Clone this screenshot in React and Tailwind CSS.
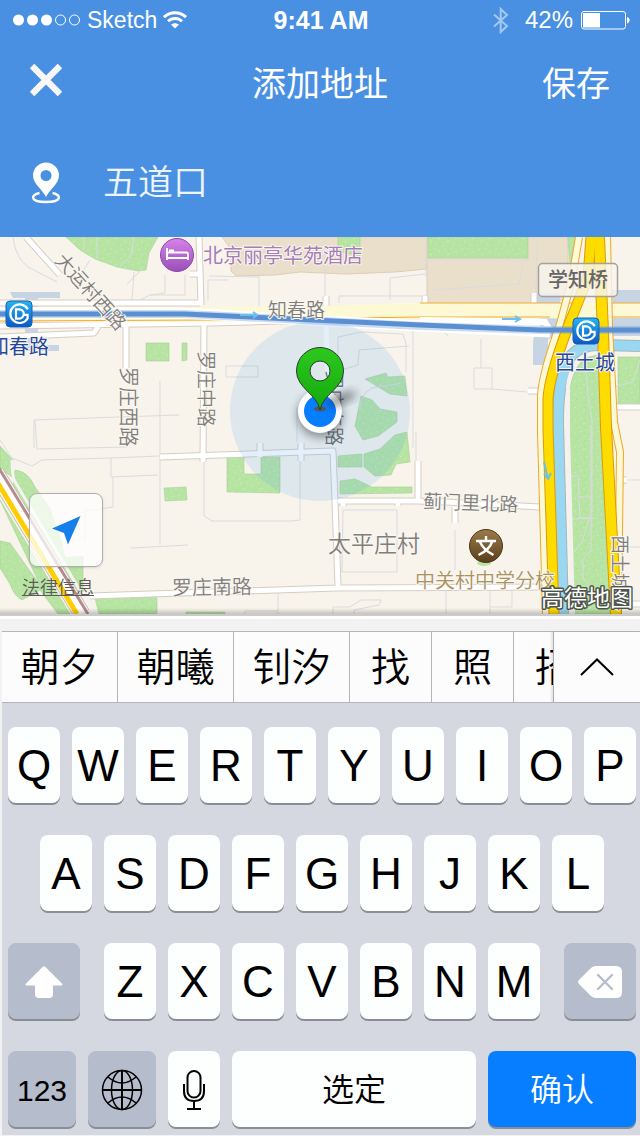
import React from 'react';

const CANDIDATES = [
  { text: '朝夕', width: 'w-29' },
  { text: '朝曦', width: 'w-29' },
  { text: '钊汐', width: 'w-29' },
  { text: '找', width: 'w-[82px]' },
  { text: '照', width: 'w-[82px]' },
  { text: '招', width: 'w-[82px]' },
];

function Key({ children, className = '', tone = 'bg-[#fdfefe] text-black', ...rest }) {
  return (
    <button
      type="button"
      className={`flex h-[76px] items-center justify-center rounded-lg pt-0.5 shadow-[0_2px_0_#8b8d92] ${tone} ${className}`}
      {...rest}
    >
      {children}
    </button>
  );
}

function LetterKeys({ letters }) {
  return letters.split('').map((letter) => (
    <Key key={letter} className="text-[44px] leading-none">
      {letter}
    </Key>
  ));
}

function StatusBar() {
  return (
    <div className="grid h-10 grid-cols-3 items-center pr-[10px] pl-3">
      <div className="flex items-center gap-1.5">
        <svg width="69" height="12" viewBox="0 0 69 12" aria-hidden="true">
          <g fill="#fff">
            <circle cx="6.500" cy="6" r="5.500" />
            <circle cx="20.500" cy="6" r="5.500" />
            <circle cx="34.500" cy="6" r="5.500" />
          </g>
          <g fill="none" stroke="#fff">
            <circle cx="48.500" cy="6" r="5" />
            <circle cx="62.500" cy="6" r="5" />
          </g>
        </svg>
        <span className="text-[23px] leading-7">Sketch</span>
        <svg width="24" height="18" viewBox="0 0 24 18" aria-hidden="true">
          <g fill="none" stroke="#fff" strokeWidth="3">
            <path d="M1 6.200C7 .400 17 .400 23 6.200" />
            <path d="M5 10.300c4-3.900 10-3.900 14 0" />
          </g>
          <path d="M12 17.600l-3.900-3.800c2.300-2 5.500-2 7.800 0z" fill="#fff" />
        </svg>
      </div>
      <div className="text-center text-[25px] leading-7 font-bold">9:41 AM</div>
      <div className="flex items-center justify-end">
        <svg width="16" height="27" viewBox="0 0 16 27" className="mr-4 opacity-50" aria-hidden="true">
          <path d="M1 7.500l13 11.500-6.300 6V2l6.300 6L1 19.500" fill="none" stroke="#fff" strokeWidth="2" />
        </svg>
        <span className="mr-2 text-[24px] leading-7">42%</span>
        <svg width="49" height="20" viewBox="0 0 49 20" aria-hidden="true">
          <rect x=".5" y="1.500" width="44" height="17.500" rx="2.500" fill="none" stroke="#fff" />
          <rect x="2" y="3" width="17" height="14.500" fill="#fff" />
          <path d="M46 7c3.500 1 3.500 5.500 0 6.500z" fill="#fff" />
        </svg>
      </div>
    </div>
  );
}

function Station({ x, y }) {
  return (
    <g transform={`translate(${x} ${y})`}>
      <rect x="-13" y="-13" width="26" height="26" rx="4" fill="url(#station)" stroke="#1660b5" />
      <path
        d="M8.800-4.800A9.300 9.300 0 1 0 8.600 4.500V.800H4"
        fill="none"
        stroke="#fff"
        strokeWidth="2.200"
      />
      <path d="M-3-4.600h3.200a4.600 4.600 0 0 1 0 9.200H-3z" fill="none" stroke="#fff" strokeWidth="2.200" />
    </g>
  );
}

function MapDrawing() {
  return (
    <svg viewBox="0 237 640 377" className="block h-auto w-full" role="img" aria-label="地图">
      <defs>
        <linearGradient id="station" x1="0" y1="0" x2="0" y2="1">
          <stop offset="0" stopColor="#27b4ee" />
          <stop offset="1" stopColor="#0a56c8" />
        </linearGradient>
        <linearGradient id="hotel" x1="0" y1="0" x2="0" y2="1">
          <stop offset="0" stopColor="#d682ea" />
          <stop offset="1" stopColor="#9a4fb8" />
        </linearGradient>
        <linearGradient id="school" x1="0" y1="0" x2="0" y2="1">
          <stop offset="0" stopColor="#9b7b4b" />
          <stop offset="1" stopColor="#5b3f1c" />
        </linearGradient>
        <linearGradient id="pin" x1="0" y1="0" x2="0" y2="1">
          <stop offset="0" stopColor="#2cc81e" />
          <stop offset="1" stopColor="#15a80e" />
        </linearGradient>
        <linearGradient id="edge" x1="0" y1="0" x2="0" y2="1">
          <stop offset="0" stopColor="#000" stopOpacity="0" />
          <stop offset="1" stopColor="#000" stopOpacity=".2" />
        </linearGradient>
        <pattern id="grass" width="17" height="13" patternUnits="userSpaceOnUse">
          <rect width="17" height="13" fill="#b7e4a3" />
          <path d="M2 3l2-1M9 1l1 1M13 5l2-1M5 8l2-1M11 11l1-1M1 11l1 1" stroke="#c9edb8" strokeWidth="1" />
          <path d="M6 4l1 1M15 9l1 1M8 11l-1 1" stroke="#aadb96" strokeWidth="1" />
        </pattern>
        <filter id="soft" x="-50%" y="-50%" width="200%" height="200%">
          <feGaussianBlur stdDeviation="4" />
        </filter>
      </defs>

      <rect y="237" width="640" height="377" fill="#f8f4ec" />

      {/* building blocks */}
      <g fill="#eadfca" stroke="#dccfb8">
        <path d="M222 237l9 12v22l5 5 39-1 25-3 46 2 49-2 32-3V237z" />
        <path d="M427 237h141v62l-32 5H427z" />
      </g>

      {/* parks */}
      <g fill="url(#grass)" stroke="#a9cf98" strokeWidth=".6">
        <path d="M66 237h92l-9 16-3 17-8 1-21-4-22-8-15-9z" />
        <path d="M338 237h22v19l-22-5zM428 237h100v21H428zM568 237h10l-8 30z" />
        <path d="M146 343h23v18h-23zM182 343h5v17l-5 1zM164 488l22-1 1 13-22 1z" />
        <path d="M227 457h17v17h17v-17h19v36l-53-1z" />
        <path d="M365 379l21-6 2 4 17-1 2 20-17-2zM361 396l11 4 8 9 17 3v10l-19 14-15 4-8-14z" />
        <path d="M338 456l24-2v13h-24zM364 454l16-5 15-14 12-3 3 30-14 2-5 11-16 1-11-9zM340 481l15-2 17 8h40v6l-72 1z" />
        <path d="M0 446l13 14-1 17-12-9zM15 470q13 1 20 17l14 20 11 30 5 21 18-2v36l-10-1-60-105z" />
        <path d="M0 500l70 114H58L40 590l-18 10q-8-4-12-16L0 568v-27l10 2 30 42z" />
        <path d="M95 598l62-4v20H99zM186 612h39v2h-39z" />
        <path d="M585 358l16-4 3 80 6 180h-37l-6-182q-2-58 18-74z" />
        <path d="M618 357h22v48h-22zM640 319q-6 0-6 11h6z" />
      </g>

      {/* lot lines */}
      <g fill="none" stroke="#d9dbe0" strokeWidth="1">
        <path d="M13 237q2 20 15 30l29 15M90 260l-15 24M134 272l-2 28-28 3M165 275v18l-15 2-10 5M185 275v20h-35M208 280v20M208 280h20" />
        <path d="M84 237v13M97 237v21M134 237l-3 18-12 13M142 269l-15 15M209 276l50 1 0 30M325 237v65M339 303v-7h87M390 300v-22l35-4" />
        <path d="M160 381v164M34 448v-28l85-3 60-2M35 420l2 29 90-2M0 440l12 18 20 8 10-6 69-2 48-2M111 457v20l47-2M113 477v30l-28 4v30M131 548l57-3M204 462v54l8 5" />
        <path d="M300 448v72l-8 1h-81M226 366h32v11h-32zM297 442v-35" />
        <path d="M338 368v-31l23-5 42 2 3 10v28M338 371l20-6 1-15 50-4M360 410q-2-14 12-22l30-5M413 328v120M416 432v30" />
        <path d="M343 510h54v62h-55zM278 590v24M245 614v-3h33M333 614v-7h17l11-7h20l-2 5-25 5v4M446 587v27M490 587v27M490 607h22v-20" />
        <path d="M426 237v40M425 260h104M434 290l85-6 4-22M537 237v12l-1 45M441 328l7 8M481 339v29M474 368h18v21h-18zM492 389l35 3" />
        <path d="M585 360l3 35 4 25v90l-10 32-8 10M591 425v125l-8 10v18l15 20M570 476h8l2 42h14M580 497h12M572 519l22-1M625 480h15M613 547h27M455 530v40M640 360l-7 22-20 5" />
      </g>

      {/* transit footprint */}
      <g fill="#c6d4e3">
        <path d="M10 292h50v6H38v12h13v16H38v19h21v6H25V298H13z" />
        <path d="M540 293h20v40h-20v-30h-8v-8zM533 365v-22q0-12 12-14l14-1v9l-11 2v26zM612 290h28v46h-32v-30h5z" />
      </g>

      {/* river */}
      <path d="M640 346l-38-1q-22-1-32 12-12 20-12 65l5 192" fill="none" stroke="#a5b6bd" strokeWidth="12" />
      <path d="M640 346l-38-1q-22-1-32 12-12 20-12 65l5 192" fill="none" stroke="#9ad7f1" strokeWidth="10" />
      <path d="M583 357q-13 9-15 30v45l5 182" fill="none" stroke="#f5f1ee" strokeWidth="4" />

      {/* local streets */}
      <g fill="none" strokeLinejoin="round">
        <g stroke="#d6cdc2" strokeWidth="7">
          <path d="M26 237l34 38M0 303h200M0 337l94-4 5-8M0 326l210-3 40-1 150-5M126 325v43M199 237l2 68M190 274h11M204 318l-1 144" />
          <path d="M160 457l173-6 2 50 3 85M260 443v14M301 443v18M326 296v12M338 501h80l28 1 94 5M418 461v40M343 501v5M398 501v5M90 596l247-8 205-1M455 507v16M425 296v8M534 293v10M528 391h12M615 407h25M619 480h8M630 604h10" />
        </g>
        <g stroke="#fff" strokeWidth="5">
          <path d="M26 237l34 38M0 303h200M0 337l94-4 5-8M0 326l210-3 40-1 150-5M126 325v43M199 237l2 68M190 274h11M204 318l-1 144" />
          <path d="M160 457l173-6 2 50 3 85M260 443v14M301 443v18M326 296v12M338 501h80l28 1 94 5M418 461v40M343 501v5M398 501v5M90 596l247-8 205-1M455 507v16M425 296v8M534 293v10M528 391h12M615 407h25M619 480h8M630 604h10" />
        </g>
        <path d="M326 322l2 60" stroke="#fff" strokeWidth="5" />
      </g>

      {/* Zhichun road */}
      <path d="M0 307h210l110-1 100-3h220v15l-220 1-210 3H0z" fill="#fdf9d4" />
      <path d="M0 321l210-1 210-3h130M420 303h160M612 303h28M612 317h28" fill="none" stroke="#f3ab35" strokeWidth="1.200" />
      <path d="M0 313h180l240 13 130 6" fill="none" stroke="#fff" strokeWidth="11" />
      <path d="M420 320l125 2 5 8" fill="none" stroke="#fff" strokeWidth="6" />

      {/* ring road */}
      <g fill="none" strokeLinejoin="round">
        <path d="M579 237l-7 42-12 45q-18 50-19 72v36l5 182" stroke="#f0a52f" strokeWidth="8" />
        <path d="M579 237l-7 42-12 45q-18 50-19 72v36l5 182" stroke="#fdf9d4" strokeWidth="6" />
        <path d="M607 237l2 90 5 95 6 30-2 162" stroke="#f0a52f" strokeWidth="8" />
        <path d="M607 237l2 90 5 95 6 30-2 162" stroke="#fdf9d4" strokeWidth="6" />
        <path d="M591 237l-3 40-20 50q-19 50-20 72v30l6 185" stroke="#d99a10" strokeWidth="11" />
        <path d="M599 237l4 95 3 95 10 187" stroke="#d99a10" strokeWidth="12" />
        <path d="M591 237l-3 40-20 50q-19 50-20 72v30l6 185" stroke="#ffdc00" strokeWidth="9" />
        <path d="M599 237l4 95 3 95 10 187" stroke="#ffdc00" strokeWidth="10" />
      </g>

      {/* railway corridor */}
      <path d="M-4 473l86 141" fill="none" stroke="#c9bfb2" strokeWidth="17" />
      <path d="M-4 473l86 141" fill="none" stroke="#fff" strokeWidth="15" />
      <path d="M-3 465L88 614" stroke="#b58b8b" strokeWidth="3" />
      <path d="M-4 480l81 134" stroke="#ffcd00" strokeWidth="5" />
      <path d="M12 460q0 12 2 20l80 134" fill="none" stroke="#f6f3f3" strokeWidth="3" />

      {/* metro line */}
      <path d="M0 314h185l235 12 120 4h100" fill="none" stroke="#6c9bd6" strokeWidth="8" opacity=".35" />
      <path d="M0 314h185l235 11 120 5h100" fill="none" stroke="#5a8fd2" strokeWidth="5" />
      <g fill="none" stroke="#69bff2" strokeWidth="2">
        <path d="M240 315h17M253 312l4 3-4 3M502 319h17M515 316l5 3-5 3M544 462l4 17M544 474l4 5 3-6" />
      </g>

      {/* accuracy ring and current position */}
      <circle cx="320" cy="411" r="90" fill="#5aa6f0" opacity=".17" />
      <g fontFamily='"Noto Sans CJK SC", sans-serif' fontSize="19" fontWeight="350" fill="#66717d">
        <text transform="translate(327 370) rotate(90)">罗庄东路</text>
      </g>
      <circle cx="320" cy="415" r="23" fill="#000" opacity=".35" filter="url(#soft)" />
      <circle cx="320" cy="411" r="22" fill="#fff" />
      <circle cx="320" cy="411" r="16" fill="#077dff" />
      <ellipse cx="341" cy="399" rx="16" ry="5" transform="rotate(-22 341 399)" fill="#222" opacity=".5" filter="url(#soft)" />
      <ellipse cx="320" cy="409" rx="6" ry="2.500" fill="#555" />
      <path
        d="M320 410c-3-16-23.500-22-23.500-39a23.500 23.500 0 0 1 47 0c0 17-20.500 23-23.500 39zm0-49a10 10 0 1 0 0 20 10 10 0 0 0 0-20z"
        fill="url(#pin)"
        stroke="#26402a"
        fillRule="evenodd"
      />

      {/* points of interest */}
      <circle cx="177" cy="255" r="16.500" fill="url(#hotel)" stroke="#8c4aa6" />
      <path d="M167 248v12M167 258h21" fill="none" stroke="#fff" strokeWidth="2" />
      <path d="M168 252.500h18.500q1.500 0 1.500 1.500v6M169 250.500h5" fill="none" stroke="#fff" strokeWidth="1.800" />
      <ellipse cx="484" cy="563" rx="7" ry="3" fill="#b7e4a3" />
      <circle cx="486" cy="546" r="16.500" fill="url(#school)" stroke="#4d3517" />
      <path d="M476 541h20M486 536v5M492.500 541q-3 9-14 14M479.500 541q4 9 14 14" fill="none" stroke="#fff" strokeWidth="2.400" />
      <Station x={19} y={314} />
      <Station x={586} y={331} />
      <rect x="538.500" y="263.500" width="79" height="33" rx="4" fill="#f8f4ee" fillOpacity=".82" stroke="#a5a19a" strokeWidth="1.500" />

      {/* labels */}
      <g
        fontFamily='"Noto Sans CJK SC", sans-serif'
        fontSize="20"
        fontWeight="350"
        fill="#7f7e7b"
        stroke="#faf7f1"
        strokeWidth="2"
        strokeLinejoin="round"
        paintOrder="stroke"
      >
        <text transform="translate(54 261) rotate(48)" fontSize="19">大运村西路</text>
        <text transform="translate(121 367) rotate(90)">罗庄西路</text>
        <text transform="translate(199 351) rotate(90)" fontSize="19">罗庄中路</text>
        <text transform="translate(613 535) rotate(90)" fontSize="19">西土城路</text>
        <text x="268" y="317" fontSize="19">知春路</text>
        <text transform="translate(172 595) rotate(-1)">罗庄南路</text>
        <text transform="translate(423 508) rotate(2)" fontSize="19">蓟门里北路</text>
        <text x="328" y="552" fontSize="23">太平庄村</text>
        <text x="203" y="263" fill="#a67db5" fontWeight="400">北京丽亭华苑酒店</text>
        <text x="415" y="588" fill="#a8925f">中关村中学分校</text>
        <text x="-11" y="354" fill="#24489c" fontWeight="400">知春路</text>
        <text x="555" y="370" fill="#24489c" fontWeight="400">西土城</text>
        <text x="548" y="287" fill="#666" stroke="none" fontWeight="500">学知桥</text>
        <text x="541" y="606" fontSize="23" fontWeight="400" fill="#fff" stroke="#4d554c" strokeWidth="3">高德地图</text>
      </g>
      <rect y="608" width="640" height="6" fill="url(#edge)" />
    </svg>
  );
}

export default function App() {
  return (
    <main className="flex w-full flex-col bg-[#f2f2f2] font-['Liberation_Sans','Noto_Sans_CJK_SC',sans-serif]">
      <header className="bg-[#4990e2] text-white">
        <StatusBar />
        <div className="grid h-[88px] grid-cols-3 items-center px-[30px]">
          <button type="button" aria-label="关闭" className="mb-2 justify-self-start">
            <svg width="32" height="32" viewBox="0 0 32 32" aria-hidden="true">
              <path d="M2 2l28 28M30 2L2 30" stroke="#f8f8f8" strokeWidth="6.500" />
            </svg>
          </button>
          <h1 className="text-center text-[34px] leading-10 font-normal whitespace-nowrap">添加地址</h1>
          <button type="button" className="justify-self-end text-[34px] leading-10">
            保存
          </button>
        </div>
        <div className="flex h-[109px] items-center pr-[30px] pl-[31px]">
          <label htmlFor="address" aria-label="地址">
            <svg width="30" height="42" viewBox="0 0 30 42" aria-hidden="true">
              <path
                d="M15 35C12 28 2 22 2 13.500a13 13 0 0 1 26 0C28 22 18 28 15 35zm0-27a5.500 5.500 0 1 0 0 11 5.500 5.500 0 0 0 0-11z"
                fill="#fff"
                fillRule="evenodd"
              />
              <path d="M8.500 31C-1 33-1 40 15 40s16-7 6.500-9" fill="none" stroke="#fff" strokeWidth="2.400" />
            </svg>
          </label>
          <input
            id="address"
            type="text"
            defaultValue="五道口"
            className="ml-[42px] min-w-0 flex-1 bg-transparent text-[35px] leading-[44px] font-[350] text-white/90 outline-none"
          />
        </div>
      </header>

      <section className="relative border-b-2 border-[#cbcaca]">
        <MapDrawing />
        <div className="absolute bottom-[14px] left-[22px] flex flex-col items-start gap-[9px]">
          <button
            type="button"
            aria-label="定位"
            className="ml-[7px] flex size-[74px] items-center justify-center rounded-lg border border-[#b0aea9] bg-white/75 shadow-sm"
          >
            <svg width="30" height="30" viewBox="0 0 30 30" aria-hidden="true">
              <path d="M29.500 1L17 29.500l-4-11.500L1 13.500z" fill="#177fea" />
            </svg>
          </button>
          <a href="#legal" className="text-[18px] leading-6 font-[350] text-[#5c5c5c] underline decoration-1 underline-offset-1">
            法律信息
          </a>
        </div>
      </section>

      <section className="border-t-[3px] border-white pt-3" aria-label="键盘">
        <div className="ml-0.5 flex h-18 border-y border-[#b4b5ba] bg-[#fcfcfc] text-black">
          <div className="flex min-w-0 flex-1 overflow-hidden">
            {CANDIDATES.map(({ text, width }) => (
              <button
                key={text}
                type="button"
                className={`${width} shrink-0 border-r border-[#b4b5ba] text-[39px] leading-none font-[350]`}
              >
                {text}
              </button>
            ))}
          </div>
          <button
            type="button"
            aria-label="更多候选"
            className="flex w-[87px] shrink-0 items-center justify-center border-l border-[#a9aaae] shadow-[-2px_0_2px_#00000018]"
          >
            <svg width="34" height="18" viewBox="0 0 34 18" aria-hidden="true">
              <path d="M1 17L17 1.500 33 17" fill="none" stroke="#000" strokeWidth="2" />
            </svg>
          </button>
        </div>

        <div className="mb-px ml-0.5 flex flex-col gap-8 bg-[#d5d8e0] pt-6 pr-1 pb-2 pl-1.5">
          <div className="grid grid-cols-10 gap-3">
            <LetterKeys letters="QWERTYUIOP" />
          </div>
          <div className="grid grid-cols-9 gap-3 px-8">
            <LetterKeys letters="ASDFGHJKL" />
          </div>
          <div className="flex gap-6">
            <Key aria-label="大写" tone="bg-[#b5bccb]" className="w-18 shrink-0">
              <svg width="38" height="32" viewBox="0 0 38 32" aria-hidden="true">
                <path
                  d="M17.800.800q1.200-1 2.400 0L37 17.500q1.500 2-.800 2H28V28q0 4-4 4H14q-4 0-4-4v-8.500H1.800q-2.300 0-.8-2z"
                  fill="#fff"
                />
              </svg>
            </Key>
            <div className="grid flex-1 grid-cols-7 gap-3">
              <LetterKeys letters="ZXCVBNM" />
            </div>
            <Key aria-label="删除" tone="bg-[#b5bccb]" className="w-18 shrink-0">
              <svg width="44" height="32" viewBox="0 0 44 32" aria-hidden="true">
                <path d="M18 0h20q6 0 6 6v20q0 6-6 6H18q-3 0-5-2L1 18q-2-2 0-4L13 2q2-2 5-2z" fill="#fff" />
                <path d="M20 9l14 14M34 9L20 23" stroke="#b5bccb" strokeWidth="2.400" strokeLinecap="round" />
              </svg>
            </Key>
          </div>
          <div className="flex gap-3">
            <Key tone="bg-[#b5bccb] text-black" className="w-17 shrink-0 text-[30px]">
              123
            </Key>
            <Key aria-label="切换语言" tone="bg-[#b5bccb]" className="w-17 shrink-0">
              <svg width="42" height="42" viewBox="0 0 42 42" aria-hidden="true">
                <g fill="none" stroke="#000" strokeWidth="1.500">
                  <circle cx="21" cy="21" r="19.500" />
                  <ellipse cx="21" cy="21" rx="10.500" ry="19.500" />
                  <path d="M7 8q14 12 28 0M7 34q14-12 28 0" />
                  <path d="M21 1.500v39M1.500 21h39" strokeWidth="2" />
                </g>
              </svg>
            </Key>
            <Key aria-label="语音输入" className="w-13 shrink-0">
              <svg width="24" height="42" viewBox="0 0 24 42" aria-hidden="true">
                <g fill="none" stroke="#000" strokeWidth="2">
                  <rect x="5.500" y="2" width="13" height="26.500" rx="6.500" />
                  <path d="M2 15v7q0 10 10 10t10-10v-7M12 32v8M5 40h14" />
                </g>
              </svg>
            </Key>
            <Key className="flex-1 text-[32px] font-[350]">选定</Key>
            <Key tone="bg-[#077dff] text-white" className="w-37 shrink-0 text-[32px] font-[350]">
              确认
            </Key>
          </div>
        </div>
      </section>
    </main>
  );
}
